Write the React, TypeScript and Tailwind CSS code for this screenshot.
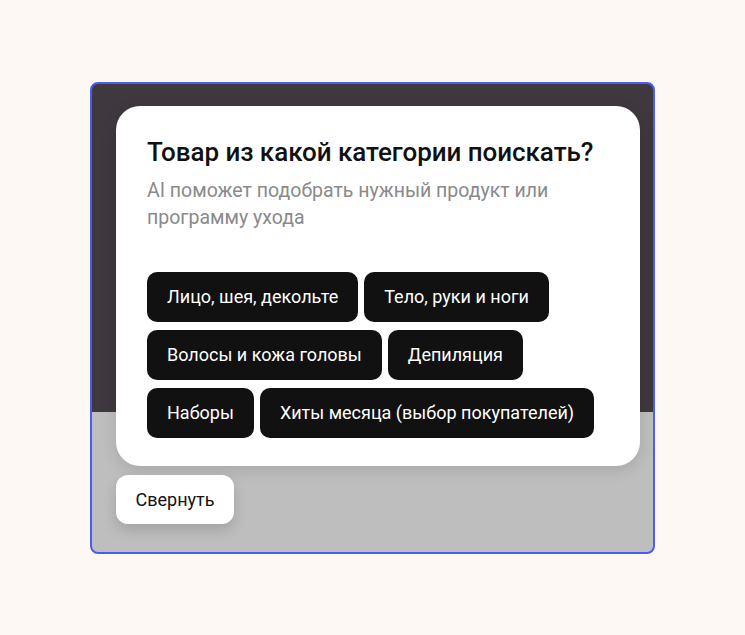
import React from "react";

const chips = [
  "Лицо, шея, декольте",
  "Тело, руки и ноги",
  "Волосы и кожа головы",
  "Депиляция",
  "Наборы",
  "Хиты месяца (выбор покупателей)",
];

export default function App() {
  return (
    <div
      className="w-[745px] h-[635px] bg-[#fdf8f4] flex items-center justify-center"
      style={{ fontFamily: "Roboto, 'Noto Sans', sans-serif" }}
    >
      <div className="w-[565px] h-[472px] rounded-[8px] border-2 border-[#4a5cf2] overflow-hidden bg-[linear-gradient(to_bottom,#3f383f_0px,#3f383f_328px,#bebebe_328px,#bebebe_100%)] pl-[24px] pt-[22px] flex flex-col items-start">
        <div className="w-[524px] h-[360px] bg-white rounded-[24px] pt-[30px] px-[31px] shadow-[0_4px_16px_rgba(0,0,0,0.12)]">
          <h1 className="text-[26px] leading-[32px] font-medium text-[#111111] tracking-[-0.05px]">
            Товар из какой категории поискать?
          </h1>
          <p className="mt-[9px] text-[19.5px] leading-[27px] text-[#8a8a8a] w-[440px]">
            AI поможет подобрать нужный продукт или программу ухода
          </p>
          <div className="mt-[41px] flex flex-wrap gap-x-[6px] gap-y-[8px]">
            {chips.map((c) => (
              <div
                key={c}
                className="h-[50px] px-[20px] rounded-[10px] bg-[#111111] text-white text-[18px] flex items-center"
              >
                {c}
              </div>
            ))}
          </div>
        </div>
        <button className="mt-[9px] h-[49px] w-[118px] bg-white rounded-[12px] text-[18px] text-[#111111] flex items-center justify-center shadow-[0_6px_14px_rgba(0,0,0,0.15)]">
          Свернуть
        </button>
      </div>
    </div>
  );
}
